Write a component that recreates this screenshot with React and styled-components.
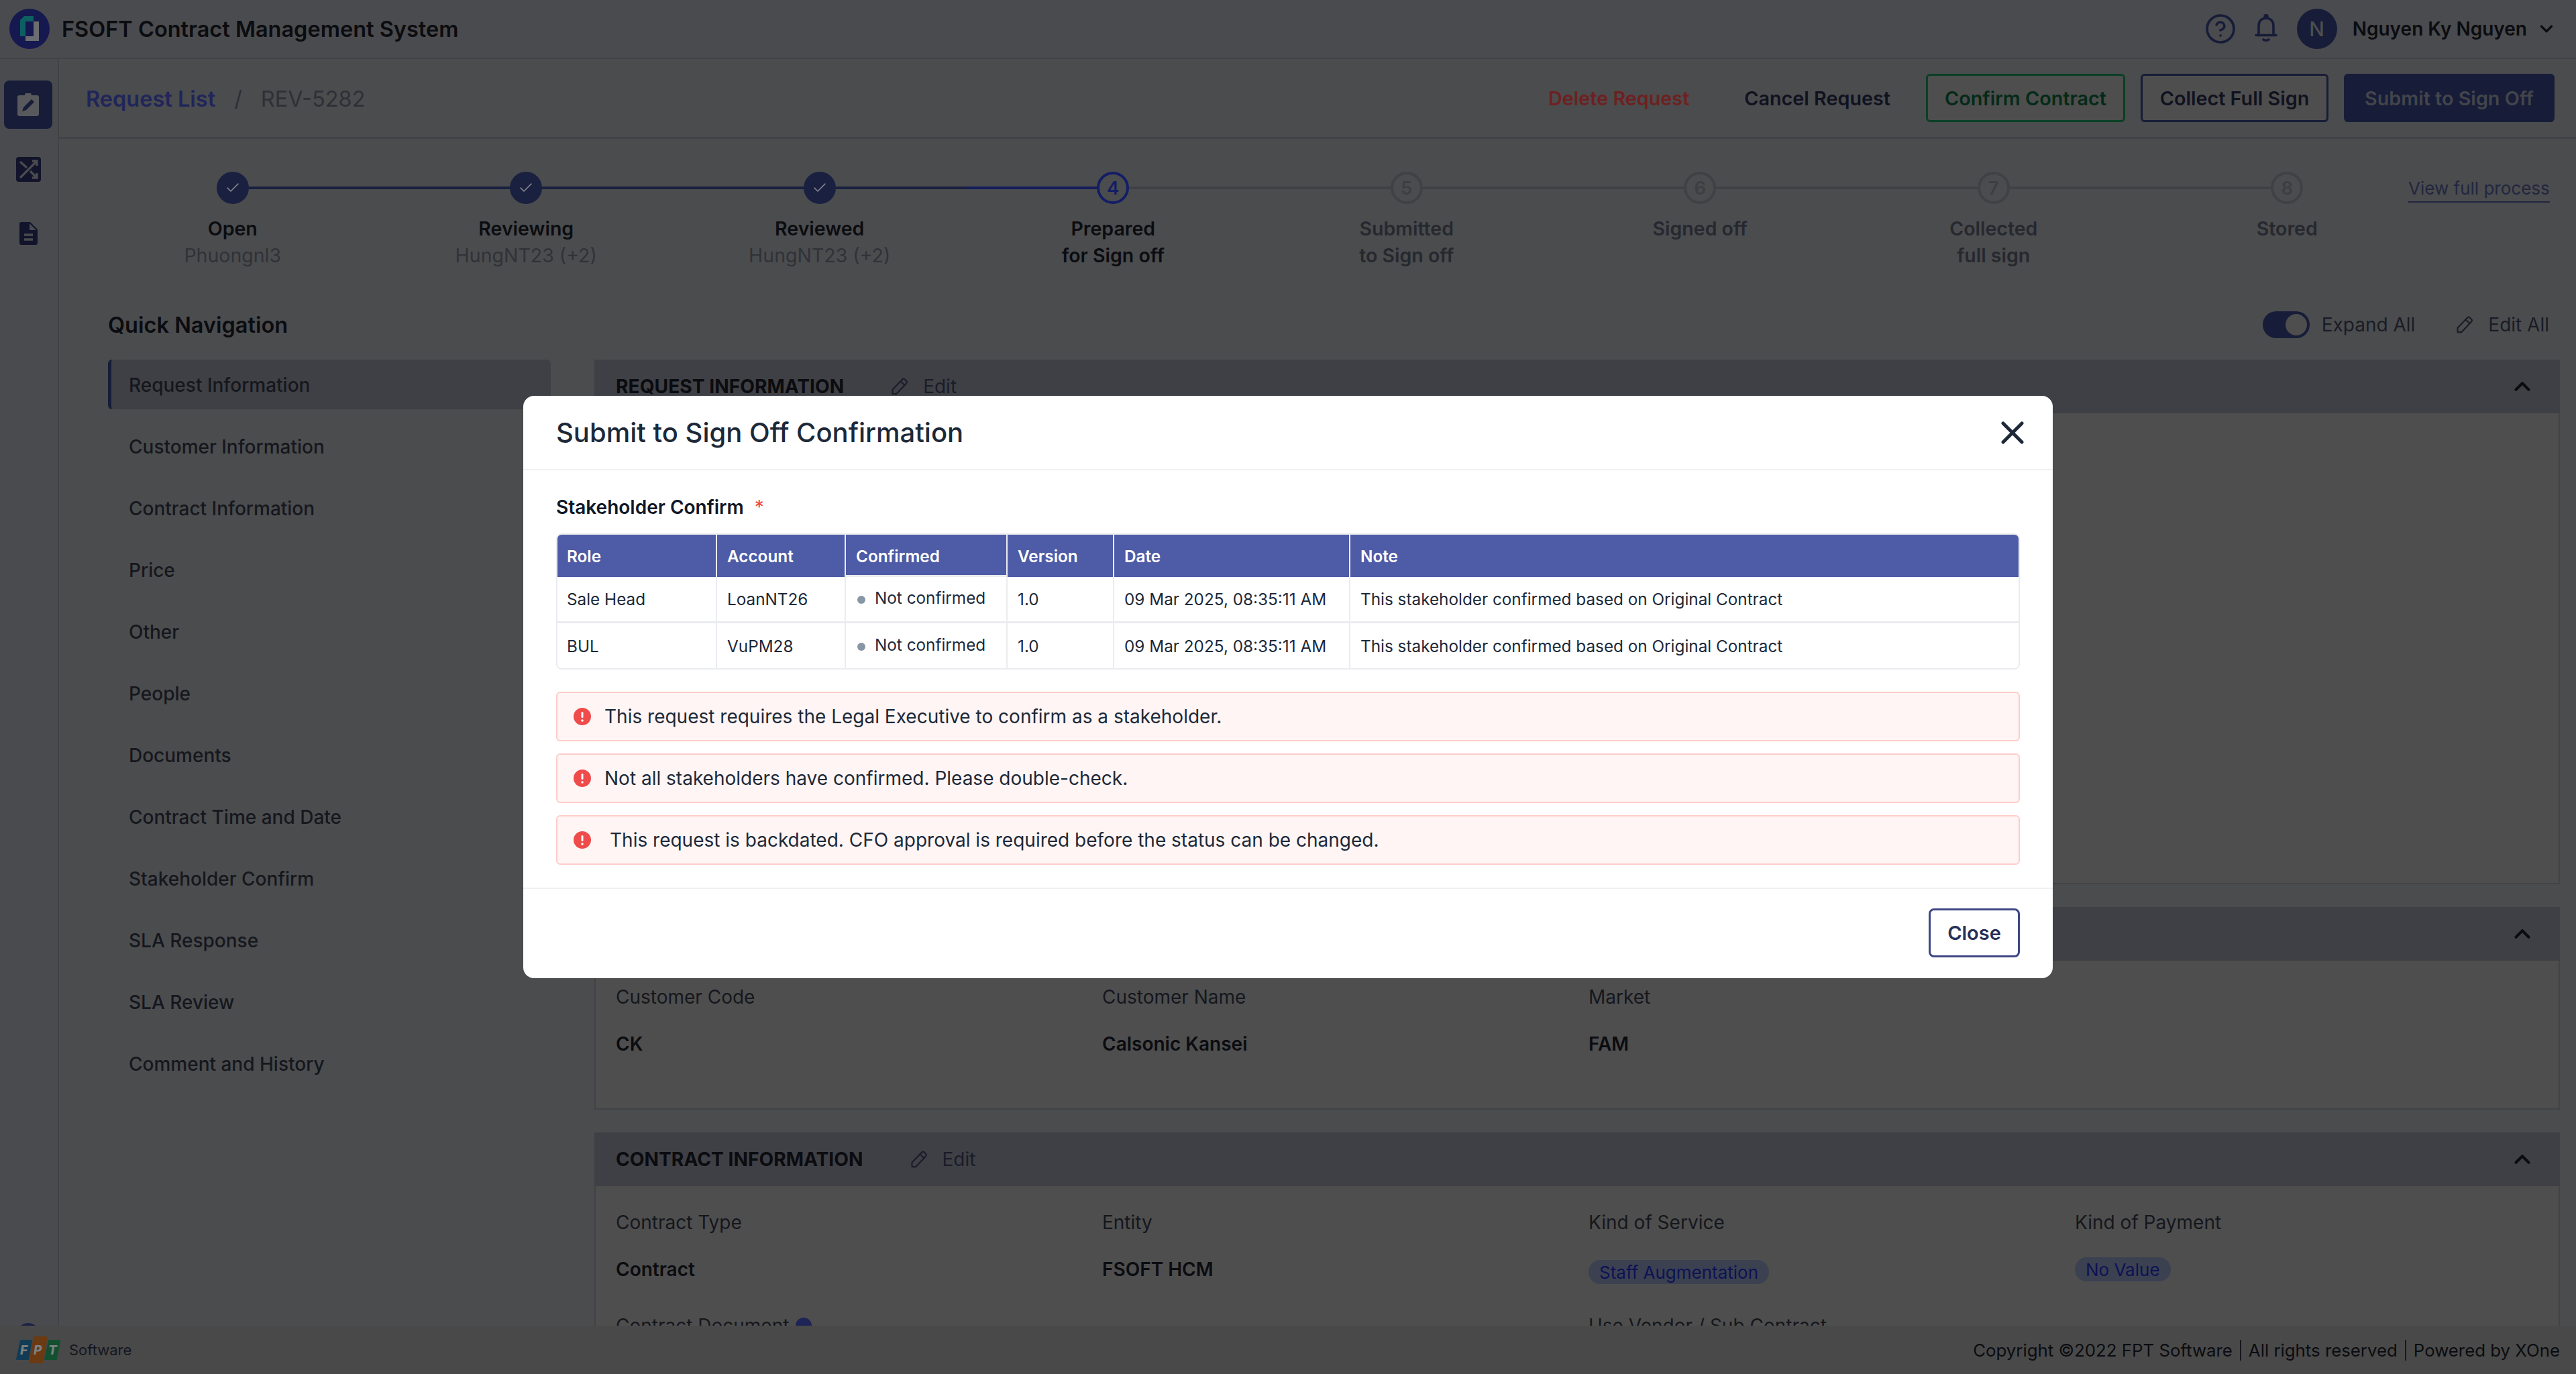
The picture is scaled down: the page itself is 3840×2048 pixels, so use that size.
import React from "react"
import styled, { createGlobalStyle } from "styled-components"
import { Check, ChevronDown, ChevronUp, CircleHelp, X } from "lucide-react"

// the whole page sits under the modal's dim, so these are the dimmed colours
const c = {
    top: "#4a4b4e",
    page: "#4b4c4e",
    card: "#4e4e4e",
    foot: "#494949",
    band: "#3f4045",
    line: "#424347",
    navy: "#171c38",
    ink: "#0b0c10",
    soft: "#15171d",
    mute: "#2e3036",
    off: "#26282f",
    track: "#404145",
}

const GlobalStyle = createGlobalStyle`
    html, body { margin: 0; padding: 0; }
    body { font-family: Inter, "Noto Sans", sans-serif; background: ${c.page}; color: ${c.ink}; }
    * { box-sizing: border-box; }
`

const Page = styled.div`
    position: relative;
    height: 100vh;
    display: flex;
    flex-direction: column;
    overflow: hidden;
`

const TopBar = styled.header`
    height: 88px;
    flex: none;
    display: flex;
    align-items: center;
    padding: 0 29px 0 14px;
    background: ${c.top};
    border-bottom: 2px solid ${c.line};
`

const AppName = styled.div`
    margin-left: 18px;
    font-size: 32.5px;
    font-weight: 600;
    color: ${c.ink};
`

const TopRight = styled.div`
    margin-left: auto;
    display: flex;
    align-items: center;
    color: ${c.navy};
`

const IconGap = styled.span`
    width: 27px;
`

const Avatar = styled.div`
    width: 60px;
    height: 60px;
    margin: 0 23px 0 29px;
    border-radius: 50%;
    background: ${c.navy};
    color: #4e4e4e;
    font-size: 30px;
    font-weight: 500;
    display: flex;
    align-items: center;
    justify-content: center;
`

const UserName = styled.div`
    font-size: 28px;
    font-weight: 600;
    color: ${c.ink};
    margin-right: 14px;
`

const Main = styled.div`
    flex: 1;
    min-height: 0;
    display: flex;
    overflow: hidden;
`

const Rail = styled.nav`
    width: 88px;
    flex: none;
    display: flex;
    flex-direction: column;
    align-items: center;
    padding-top: 32px;
    background: ${c.top};
    border-right: 2px solid ${c.line};
`

const RailButton = styled.div`
    width: 72px;
    height: 72px;
    margin-right: 2px;
    margin-bottom: 24px;
    border-radius: 8px;
    display: flex;
    align-items: center;
    justify-content: center;
    background: ${p => (p.$active ? c.navy : "transparent")};
`

const RailDot = styled.div`
    width: 34px;
    height: 34px;
    margin-top: auto;
    margin-bottom: -30px;
    margin-right: 2px;
    border-radius: 50%;
    background: #1d2247;
`

const Content = styled.div`
    flex: 1;
    min-width: 0;
    display: flex;
    flex-direction: column;
`

const ActionBar = styled.div`
    height: 119px;
    flex: none;
    display: flex;
    align-items: center;
    padding: 0 32px 0 40px;
    border-bottom: 3px solid ${c.line};
`

const Crumb = styled.span`
    font-size: 32.5px;
    padding-top: 3px;
    font-weight: ${p => (p.$link ? 600 : 400)};
    color: ${p => (p.$link ? "#20255a" : c.mute)};
`

const CrumbSep = styled.span`
    font-size: 32.5px;
    padding-top: 3px;
    color: ${c.mute};
    margin: 0 28px;
`

const Actions = styled.div`
    margin-left: auto;
    display: flex;
    align-items: center;
`

const TextAction = styled.div`
    font-size: 28.75px;
    font-weight: 600;
    color: ${p => p.$color};
    margin-right: ${p => p.$gap}px;
`

const OutlineAction = styled.div`
    height: 72px;
    width: ${p => p.$w}px;
    margin-right: 23px;
    display: flex;
    align-items: center;
    justify-content: center;
    border: 3px solid ${p => p.$color};
    border-radius: 6px;
    font-size: 28.75px;
    font-weight: 600;
    color: ${p => p.$text};
    background: #4e4e4e;
`

const SolidAction = styled.div`
    height: 72px;
    width: 314px;
    display: flex;
    align-items: center;
    justify-content: center;
    border-radius: 6px;
    font-size: 28.75px;
    font-weight: 600;
    color: #43454b;
    background: ${c.navy};
`

const StepRow = styled.div`
    flex: none;
    display: flex;
    padding: 49px 0 0 40px;
    height: 255px;
`

const Steps = styled.div`
    width: 3500px;
    flex: none;
    display: grid;
    grid-template-columns: repeat(8, 1fr);
`

const Step = styled.div`
    position: relative;
    display: flex;
    flex-direction: column;
    align-items: center;
    text-align: center;

    &::after {
        content: ${p => (p.$line ? '""' : "none")};
        position: absolute;
        top: 22px;
        left: 50%;
        width: 100%;
        height: 4px;
        background: ${p => p.$line};
    }
`

const StepDot = styled.div`
    position: relative;
    z-index: 1;
    width: 48px;
    height: 48px;
    border-radius: 50%;
    display: flex;
    align-items: center;
    justify-content: center;
    font-size: 27.5px;
    font-weight: 600;
    background: ${p => (p.$state === "done" ? "#1a2040" : c.page)};
    color: ${p => (p.$state === "now" ? "#141d66" : "#3d3e43")};
    border: ${p => (p.$state === "done" ? "none" : `4px solid ${p.$state === "now" ? "#141d66" : "#404145"}`)};
`

const StepName = styled.div`
    margin-top: 17px;
    font-size: 28.5px;
    line-height: 40px;
    font-weight: 600;
    color: ${p => (p.$off ? c.off : c.ink)};
`

const StepWho = styled.div`
    font-size: 28.5px;
    line-height: 40px;
    font-weight: 400;
    color: #303238;
`

const ProcessLink = styled.a`
    flex: none;
    height: 38px;
    margin: 8px 0 0 -38px;
    font-size: 26px;
    line-height: 34px;
    color: #22263f;
    border-bottom: 2px solid #22263f;
`

const Workspace = styled.div`
    flex: 1;
    min-height: 0;
    display: grid;
    grid-template-columns: 660px 2930px;
    column-gap: 65px;
    padding-left: 73px;
    align-items: start;
`

const NavTitle = styled.div`
    height: 60px;
    margin-top: -8px;
    display: flex;
    align-items: center;
    font-size: 32.5px;
    font-weight: 600;
    color: ${c.ink};
`

const NavList = styled.div`
    margin-top: 22px;
    display: flex;
    flex-direction: column;
    gap: 18px;
`

const NavItem = styled.div`
    height: 74px;
    display: flex;
    align-items: center;
    padding-top: 2px;
    padding-left: ${p => (p.$active ? "26px" : "31px")};
    font-size: 28px;
    font-weight: 500;
    color: ${c.soft};
    background: ${p => (p.$active ? c.band : "transparent")};
    border-left: ${p => (p.$active ? `5px solid ${c.navy}` : "none")};
    border-radius: ${p => (p.$active ? "6px" : "0")};
`

const Tools = styled.div`
    height: 60px;
    margin: -8px 0 22px;
    display: flex;
    align-items: center;
    justify-content: flex-end;
    padding-right: 16px;
    font-size: 28px;
    color: #1a1c26;
`

const Switch = styled.div`
    width: 70px;
    height: 40px;
    border-radius: 20px;
    background: ${c.navy};
    display: flex;
    justify-content: flex-end;
    align-items: center;
    padding-right: 4px;
    margin-right: 18px;

    &::after {
        content: "";
        width: 32px;
        height: 32px;
        border-radius: 50%;
        background: #4e4e4e;
    }
`

const ToolEdit = styled.div`
    margin-left: 60px;
    display: flex;
    align-items: center;
    gap: 21px;
`

const Section = styled.section`
    margin-bottom: 34px;
`

const SectionHead = styled.div`
    height: 80px;
    display: flex;
    align-items: center;
    padding: 0 37px 0 32px;
    background: ${c.band};
`

const SectionTitle = styled.div`
    font-size: 28.2px;
    font-weight: 700;
    color: ${c.ink};
`

const HeadEdit = styled.div`
    margin-left: 69px;
    display: flex;
    align-items: center;
    gap: 21px;
    font-size: 28px;
    color: #1a1c2a;
`

const HeadToggle = styled.div`
    margin-left: auto;
    display: flex;
    color: ${c.ink};
`

const SectionBody = styled.div`
    height: ${p => p.$h}px;
    padding: 34px 0 0 30px;
    background: ${c.card};
    border: 2px solid ${c.line};
    border-top: none;
    display: grid;
    grid-template-columns: repeat(4, 725px);
    grid-auto-rows: 110px;
    row-gap: 44px;
`

const Field = styled.div`
    display: flex;
    flex-direction: column;
    gap: 30px;
`

const FieldLabel = styled.div`
    display: flex;
    align-items: center;
    gap: 10px;
    height: 40px;
    font-size: 28px;
    color: ${c.soft};
`

const FieldValue = styled.div`
    height: 40px;
    display: flex;
    align-items: center;
    font-size: 28px;
    font-weight: 600;
    color: ${c.ink};
`

const Tag = styled.span`
    height: 36px;
    margin-top: ${p => p.$drop || 0}px;
    padding: 0 16px;
    display: inline-flex;
    align-items: center;
    border-radius: 18px;
    background: #3b4150;
    color: #0d1255;
    font-size: 26px;
    font-weight: 400;
`

const InfoDot = styled.span`
    width: 24px;
    height: 24px;
    border-radius: 50%;
    background: #1d2456;
`

const Footer = styled.footer`
    height: 72px;
    flex: none;
    display: flex;
    align-items: center;
    padding: 0 24px;
    background: ${c.foot};
`

const Brand = styled.div`
    display: flex;
    align-items: center;
    gap: 11px;
    font-size: 22px;
    color: #14161f;
`

const Legal = styled.div`
    margin-left: auto;
    display: flex;
    align-items: center;
    font-size: 25.8px;
    color: ${c.ink};
`

const LegalBit = styled.span`
    & + & {
        margin-left: 11px;
        padding-left: 11px;
        border-left: 2px solid #17181c;
    }
`

const Backdrop = styled.div`
    position: absolute;
    inset: 0;
    display: flex;
    align-items: center;
    justify-content: center;
`

const Modal = styled.div`
    width: 2280px;
    height: 868px;
    background: #fff;
    border-radius: 16px;
    display: flex;
    flex-direction: column;
`

const ModalHead = styled.div`
    height: 111px;
    flex: none;
    display: flex;
    align-items: center;
    justify-content: space-between;
    padding: 0 32px 0 49px;
    border-bottom: 2px solid #f0f1f3;
    font-size: 40px;
    font-weight: 500;
    color: #1d2939;
`

const CloseIcon = styled.div`
    display: flex;
    color: #1d2939;
`

const ModalBody = styled.div`
    flex: 1;
    padding: 35px 49px 0;
`

const FormLabel = styled.div`
    height: 40px;
    display: flex;
    align-items: center;
    font-size: 28px;
    font-weight: 600;
    color: #101828;
`

const Star = styled.span`
    margin-left: 16px;
    color: #f04438;
    font-weight: 400;
`

const TableWrap = styled.div`
    margin-top: 19px;
    border: 2px solid #eaecf0;
    border-radius: 8px;
    overflow: hidden;
`

const Table = styled.table`
    width: 100%;
    table-layout: fixed;
    border-collapse: separate;
    border-spacing: 0;
`

const Th = styled.th`
    height: 63px;
    padding: 0 0 0 ${p => (p.$first ? 14 : 15)}px;
    text-align: left;
    font-size: 24.3px;
    font-weight: 600;
    color: #fff;
    background: #4e5ba6;
    border-left: ${p => (p.$first ? "none" : "2px solid #eaecf0")};
    box-shadow: ${p => (p.$raised ? "inset 0 -3px 0 #eaecf0" : "none")};
`

const Td = styled.td`
    height: ${p => (p.$last ? 67 : 69)}px;
    padding: 0 0 ${p => (p.$raised ? 4 : 0)}px ${p => (p.$first ? 14 : 15)}px;
    font-size: 24.3px;
    font-weight: 400;
    color: #1d2939;
    border-left: ${p => (p.$first ? "none" : "2px solid #eaecf0")};
    border-bottom: ${p => (p.$last ? "none" : "3px solid #eaecf0")};
`

const StatusDot = styled.span`
    display: inline-block;
    width: 12px;
    height: 12px;
    margin: 0 14px 0 2px;
    border-radius: 50%;
    background: #8896a6;
`

const Alert = styled.div`
    height: 74px;
    margin-top: ${p => p.$first ? 33 : 18}px;
    padding-left: 24px;
    display: flex;
    align-items: center;
    gap: ${p => p.$gap}px;
    background: #fef5f4;
    border: 2px solid #fecdca;
    border-radius: 6px;
    font-size: 28px;
    color: #1d2939;
`

const ModalFoot = styled.div`
    height: 135px;
    flex: none;
    display: flex;
    align-items: center;
    justify-content: flex-end;
    padding: 0 49px 2px 0;
    border-top: 2px solid #eef0f2;
`

const CloseButton = styled.div`
    width: 136px;
    height: 73px;
    display: flex;
    align-items: center;
    justify-content: center;
    border: 3px solid #3e4784;
    border-radius: 8px;
    font-size: 29px;
    font-weight: 600;
    color: #293056;
`

const Logo = () => (
    <svg width="60" height="60" viewBox="0 0 60 60">
        <circle cx="30" cy="30" r="30" fill="#15194f" />
        <path d="M22 11H36V19H24V41H16V17Z" fill="#0e5f62" />
        <path d="M36 19H44V48H24V41H36Z" fill="#6c6d70" />
    </svg>
)

const BellIcon = () => (
    <svg width="34" height="44" viewBox="0 0 34 44" fill="none" stroke="currentColor" strokeWidth="3.6" strokeLinecap="round">
        <circle cx="17" cy="3.5" r="2" fill="currentColor" />
        <path d="M6 31V17C6 10.5 10.5 6 17 6s11 4.500 11 11v14" />
        <path d="M2 31.500H32" />
        <path d="M13 38c1.500 1.600 6.500 1.600 8 0" />
    </svg>
)

const PencilIcon = ({ size = 28 }) => (
    <svg width={size} height={size} viewBox="0 0 24 24" fill="none" stroke="currentColor" strokeWidth="1.8" strokeLinejoin="round">
        <path d="M3 21.500V16L15.500 3a2.200 2.200 0 0 1 3.100 0l2 2a2.200 2.200 0 0 1 0 3.100L8 21.500Z" />
        <path d="M13.500 5.500l5 5" />
    </svg>
)

const ClipboardIcon = () => (
    <svg width="32" height="34" viewBox="0 0 32 34">
        <path d="M3 3h8a5 5 0 0 1 10 0h8a3 3 0 0 1 3 3v25a3 3 0 0 1-3 3H3a3 3 0 0 1-3-3V6a3 3 0 0 1 3-3Z" fill="#58595c" />
        <path d="M7 27l2-6 12-12 4 4-12 12Z" fill="#171c38" />
    </svg>
)

const ShuffleIcon = () => (
    <svg width="37" height="37" viewBox="0 0 37 37">
        <rect width="37" height="37" rx="4" fill="#11142b" />
        <path d="M6 31L31 6M24 6h7v7M6 7l10 9M21 21l10 10M31 24v7h-7" fill="none" stroke="#4a4b4e" strokeWidth="3.4" />
    </svg>
)

const DocIcon = () => (
    <svg width="27" height="34" viewBox="0 0 27 34">
        <path d="M3 0H16L27 11V31a3 3 0 0 1-3 3H3a3 3 0 0 1-3-3V3a3 3 0 0 1 3-3Z" fill="#11142b" />
        <path d="M15 2V12H25Z" fill="#4a4b4e" />
        <path d="M7 19H20M7 26H20" stroke="#4a4b4e" strokeWidth="3.4" />
    </svg>
)

const AlertIcon = () => (
    <svg width="26" height="26" viewBox="0 0 26 26">
        <circle cx="13" cy="13" r="13" fill="#f04b4b" />
        <rect x="11.500" y="6" width="3" height="9" rx="1.500" fill="#fff" />
        <circle cx="13" cy="19" r="1.800" fill="#fff" />
    </svg>
)

const FptLogo = () => (
    <svg width="68" height="41" viewBox="0 0 68 41" fontFamily="Inter, sans-serif" fontWeight="800" fontStyle="italic" fontSize="19" fill="#7d8083">
        <path d="M7 6H23L18 34H1Z" fill="#123c55" stroke="#123c55" strokeWidth="2" strokeLinejoin="round" />
        <path d="M27 1H46L39 39H20Z" fill="#6b3a12" stroke="#6b3a12" strokeWidth="2" strokeLinejoin="round" />
        <path d="M49 6H65L60 34H43Z" fill="#125030" stroke="#125030" strokeWidth="2" strokeLinejoin="round" />
        <text x="6" y="27">F</text>
        <text x="26" y="27">P</text>
        <text x="48" y="27">T</text>
    </svg>
)

const stepList = [
    { name: ["Open"], who: "Phuongnl3", state: "done", line: "#1a2040" },
    { name: ["Reviewing"], who: "HungNT23 (+2)", state: "done", line: "#1a2040" },
    { name: ["Reviewed"], who: "HungNT23 (+2)", state: "done", line: "linear-gradient(90deg, #1a2040 50%, #141d5c 50%)" },
    { name: ["Prepared", "for Sign off"], state: "now", n: 4, line: c.track },
    { name: ["Submitted", "to Sign off"], state: "todo", n: 5, line: c.track },
    { name: ["Signed off"], state: "todo", n: 6, line: c.track },
    { name: ["Collected", "full sign"], state: "todo", n: 7, line: c.track },
    { name: ["Stored"], state: "todo", n: 8 },
]

const navItems = [
    "Request Information", "Customer Information", "Contract Information", "Price", "Other", "People",
    "Documents", "Contract Time and Date", "Stakeholder Confirm", "SLA Response", "SLA Review", "Comment and History",
]

const stakeholders = [
    { role: "Sale Head", account: "LoanNT26" },
    { role: "BUL", account: "VuPM28" },
]

const alerts = [
    { text: "This request requires the Legal Executive to confirm as a stakeholder.", gap: 20 },
    { text: "Not all stakeholders have confirmed. Please double-check.", gap: 20 },
    { text: "This request is backdated. CFO approval is required before the status can be changed.", gap: 28 },
]

const SectionHeader = ({ title, edit }) => (
    <SectionHead>
        <SectionTitle>{title}</SectionTitle>
        {edit && <HeadEdit><PencilIcon />Edit</HeadEdit>}
        <HeadToggle><ChevronUp size={38} strokeWidth={2.6} /></HeadToggle>
    </SectionHead>
)

const App = () => (
    <Page>
        <GlobalStyle />
        <TopBar>
            <Logo />
            <AppName>FSOFT Contract Management System</AppName>
            <TopRight>
                <CircleHelp size={48} strokeWidth={1.8} />
                <IconGap />
                <BellIcon />
                <Avatar>N</Avatar>
                <UserName>Nguyen Ky Nguyen</UserName>
                <ChevronDown size={30} strokeWidth={2.6} color={c.ink} />
            </TopRight>
        </TopBar>
        <Main>
            <Rail>
                <RailButton $active><ClipboardIcon /></RailButton>
                <RailButton><ShuffleIcon /></RailButton>
                <RailButton><DocIcon /></RailButton>
                <RailDot />
            </Rail>
            <Content>
                <ActionBar>
                    <Crumb $link>Request List</Crumb>
                    <CrumbSep>/</CrumbSep>
                    <Crumb>REV-5282</Crumb>
                    <Actions>
                        <TextAction $color="#6e2020" $gap={82}>Delete Request</TextAction>
                        <TextAction $color="#10121f" $gap={53}>Cancel Request</TextAction>
                        <OutlineAction $w={297} $color="#0a4026" $text="#052a18">Confirm Contract</OutlineAction>
                        <OutlineAction $w={280} $color="#171c38" $text="#10121f">Collect Full Sign</OutlineAction>
                        <SolidAction>Submit to Sign Off</SolidAction>
                    </Actions>
                </ActionBar>
                <StepRow>
                    <Steps>
                        {stepList.map(s => (
                            <Step key={s.name[0]} $line={s.line}>
                                <StepDot $state={s.state}>
                                    {s.state === "done" ? <Check size={24} strokeWidth={1.5} color="#8c8d90" /> : s.n}
                                </StepDot>
                                <StepName $off={s.state === "todo"}>
                                    {s.name.map(line => <div key={line}>{line}</div>)}
                                </StepName>
                                {s.who && <StepWho>{s.who}</StepWho>}
                            </Step>
                        ))}
                    </Steps>
                    <ProcessLink>View full process</ProcessLink>
                </StepRow>
                <Workspace>
                    <div>
                        <NavTitle>Quick Navigation</NavTitle>
                        <NavList>
                            {navItems.map((item, i) => <NavItem key={item} $active={i === 0}>{item}</NavItem>)}
                        </NavList>
                    </div>
                    <div>
                        <Tools>
                            <Switch />
                            Expand All
                            <ToolEdit><PencilIcon />Edit All</ToolEdit>
                        </Tools>
                        <Section>
                            <SectionHeader title="REQUEST INFORMATION" edit />
                            <SectionBody $h={702} />
                        </Section>
                        <Section>
                            <SectionHeader title="CUSTOMER INFORMATION" edit />
                            <SectionBody $h={222}>
                                <Field><FieldLabel>Customer Code</FieldLabel><FieldValue>CK</FieldValue></Field>
                                <Field><FieldLabel>Customer Name</FieldLabel><FieldValue>Calsonic Kansei</FieldValue></Field>
                                <Field><FieldLabel>Market</FieldLabel><FieldValue>FAM</FieldValue></Field>
                            </SectionBody>
                        </Section>
                        <Section>
                            <SectionHeader title="CONTRACT INFORMATION" edit />
                            <SectionBody $h={400}>
                                <Field><FieldLabel>Contract Type</FieldLabel><FieldValue>Contract</FieldValue></Field>
                                <Field><FieldLabel>Entity</FieldLabel><FieldValue>FSOFT HCM</FieldValue></Field>
                                <Field><FieldLabel>Kind of Service</FieldLabel><FieldValue><Tag $drop={8}>Staff Augmentation</Tag></FieldValue></Field>
                                <Field><FieldLabel>Kind of Payment</FieldLabel><FieldValue><Tag>No Value</Tag></FieldValue></Field>
                                <Field><FieldLabel>Contract Document<InfoDot /></FieldLabel></Field>
                                <Field />
                                <Field><FieldLabel>Use Vendor / Sub Contract</FieldLabel></Field>
                            </SectionBody>
                        </Section>
                    </div>
                </Workspace>
            </Content>
        </Main>
        <Footer>
            <Brand><FptLogo />Software</Brand>
            <Legal>
                <LegalBit>Copyright ©2022 FPT Software</LegalBit>
                <LegalBit>All rights reserved</LegalBit>
                <LegalBit>Powered by XOne</LegalBit>
            </Legal>
        </Footer>
        <Backdrop>
            <Modal>
                <ModalHead>
                    Submit to Sign Off Confirmation
                    <CloseIcon><X size={56} strokeWidth={2.2} /></CloseIcon>
                </ModalHead>
                <ModalBody>
                    <FormLabel>Stakeholder Confirm<Star>*</Star></FormLabel>
                    <TableWrap>
                        <Table>
                            <colgroup>
                                <col style={{ width: 236 }} />
                                <col style={{ width: 192 }} />
                                <col style={{ width: 241 }} />
                                <col style={{ width: 159 }} />
                                <col style={{ width: 352 }} />
                                <col />
                            </colgroup>
                            <thead>
                                <tr>
                                    <Th $first>Role</Th>
                                    <Th>Account</Th>
                                    <Th $raised>Confirmed</Th>
                                    <Th>Version</Th>
                                    <Th>Date</Th>
                                    <Th>Note</Th>
                                </tr>
                            </thead>
                            <tbody>
                                {stakeholders.map((s, i) => {
                                    const last = i === stakeholders.length - 1
                                    return (
                                        <tr key={s.role}>
                                            <Td $first $last={last}>{s.role}</Td>
                                            <Td $last={last}>{s.account}</Td>
                                            <Td $last={last} $raised><StatusDot />Not confirmed</Td>
                                            <Td $last={last}>1.0</Td>
                                            <Td $last={last}>09 Mar 2025, 08:35:11 AM</Td>
                                            <Td $last={last}>This stakeholder confirmed based on Original Contract</Td>
                                        </tr>
                                    )
                                })}
                            </tbody>
                        </Table>
                    </TableWrap>
                    {alerts.map((a, i) => (
                        <Alert key={a.text} $first={i === 0} $gap={a.gap}><AlertIcon />{a.text}</Alert>
                    ))}
                </ModalBody>
                <ModalFoot>
                    <CloseButton>Close</CloseButton>
                </ModalFoot>
            </Modal>
        </Backdrop>
    </Page>
)

export default App
